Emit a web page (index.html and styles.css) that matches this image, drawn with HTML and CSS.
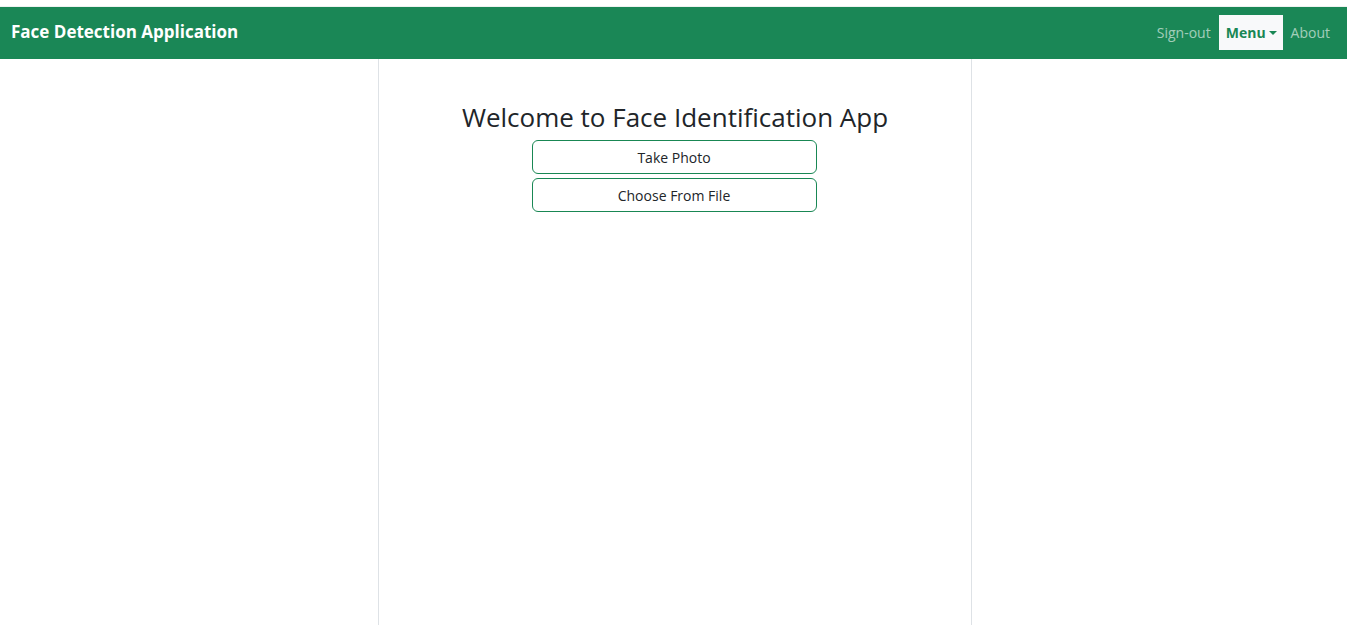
FILE: index.html
```html
<!DOCTYPE html>
<html lang="en">
<head>
<meta charset="utf-8">
<title>Face Detection Application</title>
<link rel="stylesheet" href="styles.css">
</head>
<body>
<div class="topstrip"></div>
<nav class="navbar">
  <a class="brand" href="#">Face Detection Application</a>
  <ul class="nav">
    <li><a class="nav-link" href="#">Sign-out</a></li>
    <li><a class="nav-link active" href="#">Menu<span class="caret"></span></a></li>
    <li><a class="nav-link" href="#">About</a></li>
  </ul>
</nav>
<main class="page">
  <section class="column">
    <h1 class="title">Welcome to Face Identification App</h1>
    <div class="actions">
      <button class="btn" type="button">Take Photo</button>
      <button class="btn" type="button">Choose From File</button>
    </div>
  </section>
</main>
</body>
</html>
```

FILE: styles.css
```css
* { box-sizing: border-box; }
html, body { height: 100%; }
body {
  margin: 0;
  font-family: "Open Sans", "DejaVu Sans", sans-serif;
  color: #212529;
  background: #fff;
  display: flex;
  flex-direction: column;
  overflow: hidden;
}
.topstrip {
  height: 7px;
  border-bottom: 1px solid #eef2f0;
  flex: none;
}
.navbar {
  flex: none;
  height: 52px;
  background: #1a8756;
  display: flex;
  align-items: center;
  justify-content: space-between;
  padding: 0 9px 0 11px;
}
.brand {
  color: #fff;
  font-weight: 700;
  font-size: 17px;
  text-decoration: none;
  margin-top: -4px;
}
.nav {
  list-style: none;
  margin: 0;
  padding: 0;
  display: flex;
  align-items: center;
  margin-top: -2px;
}
.nav-link {
  display: flex;
  align-items: center;
  height: 35px;
  padding: 0 8px;
  color: rgba(255,255,255,0.6);
  text-decoration: none;
  font-size: 14px;
}
.nav-link.active {
  background: #f8f9fa;
  color: #198754;
  font-weight: 700;
  padding: 0 6px 0 7px;
}
.caret {
  width: 0;
  height: 0;
  border-left: 4px solid transparent;
  border-right: 4px solid transparent;
  border-top: 4px solid #198754;
  margin-left: 3px;
  margin-top: 1px;
}
.page {
  flex: 1;
  display: flex;
  justify-content: center;
  padding-left: 3px;
}
.column {
  width: 594px;
  border-left: 1px solid #dee2e6;
  border-right: 1px solid #dee2e6;
  display: flex;
  flex-direction: column;
  align-items: center;
  padding-top: 39px;
}
.title {
  margin: 0 0 4px;
  font-weight: 400;
  font-size: 26px;
  line-height: 38px;
}
.actions {
  display: flex;
  flex-direction: column;
  gap: 4px;
  margin-left: -2px;
}
.btn {
  width: 285px;
  height: 34px;
  background: #fff;
  border: 1px solid #198754;
  border-radius: 6px;
  font-family: inherit;
  font-size: 14px;
  color: #212529;
  padding: 0;
}
```
